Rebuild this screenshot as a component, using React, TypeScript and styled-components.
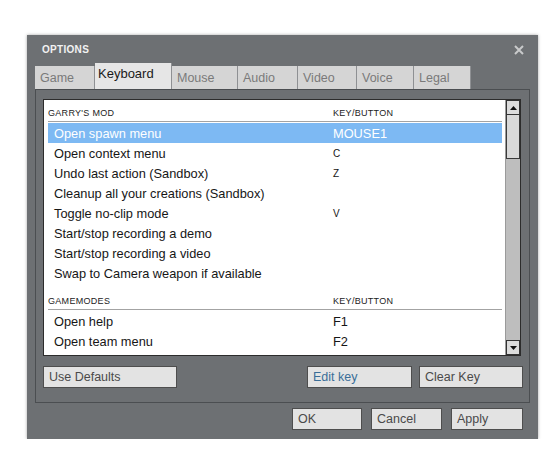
import React from 'react';
import styled, { createGlobalStyle } from 'styled-components';

const GlobalStyle = createGlobalStyle`
  * { box-sizing: border-box; }
  body {
    margin: 0;
    background: #fff;
    font-family: 'Liberation Sans', Arial, sans-serif;
  }
`;

interface TabProps {
  active?: boolean;
  w: number;
};

interface ButtonProps {
  w: number;
  link?: boolean;
};

const Frame = styled.div`
  width: 511px;
  height: 404px;
  margin: 35px 0 0 27px;
  padding: 0 8px;
  background: #6d7073;
  box-shadow: 0 0 3px rgba(0, 0, 0, 0.35);
  display: flex;
  flex-direction: column;
`;

const TitleBar = styled.div`
  height: 28px;
  padding: 0 6px 0 7px;
  display: flex;
  align-items: center;
  justify-content: space-between;
`;

const Title = styled.span`
  font-size: 10px;
  font-weight: bold;
  color: #f2f2f2;
  letter-spacing: 0.3px;
`;

const CloseBtn = styled.svg`
  width: 10px;
  height: 10px;
  margin-top: 2px;
`;

const TabRow = styled.div`
  height: 26px;
  display: flex;
  align-items: flex-end;
`;

const Tab = styled.div<TabProps>`
  width: ${props => props.w}px;
  height: ${props => props.active ? 26 : 23}px;
  padding: ${props => props.active ? '3px 0 0 3px' : '5px 0 0 5px'};
  background: ${props => props.active ? '#e6e6e6' : '#d5d5d5'};
  color: ${props => props.active ? '#1a1a1a' : '#7a7a7a'};
  font-size: ${props => props.active ? 13 : 12.5}px;
  border-right: 1px solid #8e9093;
  line-height: 15px;
`;

const Panel = styled.div`
  height: 314px;
  border: 1px solid #4b4e51;
  padding: 9px 8px 0 7px;
  display: flex;
  flex-direction: column;
`;

const ListBox = styled.div`
  height: 257px;
  background: #fff;
  border: 1px solid #2c2c2c;
  display: flex;
`;

const ListBody = styled.div`
  flex: 1;
  overflow: hidden;
  padding: 0 3px 0 4px;
`;

const SectionHead = styled.div<{ first?: boolean }>`
  height: 22px;
  margin-top: ${props => props.first ? 0 : 5}px;
  margin-bottom: 1px;
  padding-top: 7px;
  border-bottom: 1px solid #a3a3a3;
  display: flex;
  font-size: 9px;
  line-height: 12px;
  color: #222;
  letter-spacing: 0.3px;
`;

const ActionCol = styled.span`
  width: 285px;
`;

const Row = styled.div<{ selected?: boolean }>`
  height: 20px;
  padding-left: 6px;
  display: flex;
  align-items: center;
  font-size: 12.8px;
  background: ${props => props.selected ? '#7db9f3' : 'transparent'};
  color: ${props => props.selected ? '#fff' : '#161616'};
`;

const RowAction = styled.span`
  width: 279px;
  white-space: nowrap;
`;

// single letter binds are drawn in the small header face
const RowKey = styled.span<{ small?: boolean }>`
  font-size: ${props => props.small ? 10 : 12.8}px;
  text-transform: ${props => props.small ? 'uppercase' : 'none'};
`;

const Scrollbar = styled.div`
  width: 15px;
  background: #bebebe;
  display: flex;
  flex-direction: column;
  border-left: 1px solid #9a9a9a;
`;

const ScrollArrow = styled.div`
  height: 15px;
  background: #dcdcdc;
  border: 1px solid #333;
  display: flex;
  align-items: center;
  justify-content: center;
`;

const Thumb = styled.div`
  height: 44px;
  background: #d9d9d9;
  border: 1px solid #3a3a3a;
  border-top: none;
`;

const Track = styled.div`
  flex: 1;
`;

const ButtonRow = styled.div`
  margin-top: 10px;
  margin-right: -2px;
  display: flex;
  gap: 7px;
`;

const Spacer = styled.div`
  flex: 1;
`;

const Button = styled.div<ButtonProps>`
  width: ${props => props.w}px;
  height: 22px;
  padding: 0 0 0 5px;
  background: #e3e3e3;
  border: 1px solid #4e4e4e;
  color: ${props => props.link ? '#3a6e98' : '#4a4a4a'};
  font-size: 12.5px;
  line-height: 20px;
`;

const Footer = styled.div`
  padding: 5px 7px 0 0;
  display: flex;
  justify-content: flex-end;
  gap: 9px;
`;

const tabs = [
  { name: 'Game', w: 60 },
  { name: 'Keyboard', w: 77 },
  { name: 'Mouse', w: 66 },
  { name: 'Audio', w: 60 },
  { name: 'Video', w: 59 },
  { name: 'Voice', w: 57 },
  { name: 'Legal', w: 57 },
];

const sections = [
  {
    title: "GARRY'S MOD",
    rows: [
      ['Open spawn menu', 'MOUSE1'],
      ['Open context menu', 'c'],
      ['Undo last action (Sandbox)', 'z'],
      ['Cleanup all your creations (Sandbox)', ''],
      ['Toggle no-clip mode', 'v'],
      ['Start/stop recording a demo', ''],
      ['Start/stop recording a video', ''],
      ['Swap to Camera weapon if available', ''],
    ],
  },
  {
    title: 'GAMEMODES',
    rows: [
      ['Open help', 'F1'],
      ['Open team menu', 'F2'],
      ['Change player model', ''],
    ],
  },
];

function Arrow({ down }: { down?: boolean }) {
  return (
    <svg width='7' height='4' viewBox='0 0 7 4'>
      <polygon points={down ? '0,0 7,0 3.5,4' : '0,4 7,4 3.5,0'} fill='#111' />
    </svg>
  );
};

function App() {
  return (
    <>
      <GlobalStyle />
      <Frame>
        <TitleBar>
          <Title>OPTIONS</Title>
          <CloseBtn viewBox='0 0 10 10'>
            <path d='M1 1 L9 9 M9 1 L1 9' stroke='#c9cacb' strokeWidth='2' />
          </CloseBtn>
        </TitleBar>
        <TabRow>
          {tabs.map(tab => (
            <Tab key={tab.name} w={tab.w} active={tab.name === 'Keyboard'}>{tab.name}</Tab>
          ))}
        </TabRow>
        <Panel>
          <ListBox>
            <ListBody>
              {sections.map((section, si) => (
                <React.Fragment key={section.title}>
                  <SectionHead first={si === 0}>
                    <ActionCol>{section.title}</ActionCol>
                    <span>KEY/BUTTON</span>
                  </SectionHead>
                  {section.rows.map(([action, key], ri) => (
                    <Row key={action} selected={si === 0 && ri === 0}>
                      <RowAction>{action}</RowAction>
                      <RowKey small={key.length === 1}>{key}</RowKey>
                    </Row>
                  ))}
                </React.Fragment>
              ))}
            </ListBody>
            <Scrollbar>
              <ScrollArrow><Arrow /></ScrollArrow>
              <Thumb />
              <Track />
              <ScrollArrow><Arrow down /></ScrollArrow>
            </Scrollbar>
          </ListBox>
          <ButtonRow>
            <Button w={134}>Use Defaults</Button>
            <Spacer />
            <Button w={105} link>Edit key</Button>
            <Button w={104}>Clear Key</Button>
          </ButtonRow>
        </Panel>
        <Footer>
          <Button w={70}>OK</Button>
          <Button w={71}>Cancel</Button>
          <Button w={72}>Apply</Button>
        </Footer>
      </Frame>
    </>
  );
};

export default App;
